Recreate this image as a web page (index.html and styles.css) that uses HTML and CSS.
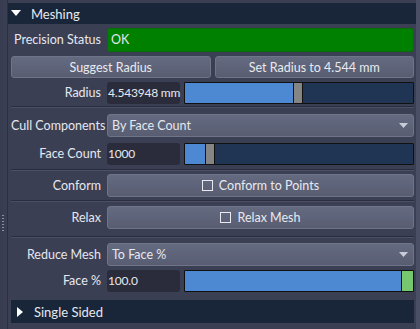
FILE: index.html
```html
<!DOCTYPE html>
<html>
<head>
<meta charset="utf-8">
<link rel="stylesheet" href="styles.css">
</head>
<body>
<div class="app">
  <div class="gutter"><div class="grip"></div></div>
  <div class="main">
    <div class="header">
      <svg class="tri" width="10" height="7" viewBox="0 0 10 7"><path d="M0 0H10L5 6Z" fill="#fff"/></svg>
      <span>Meshing</span>
    </div>
    <div class="body">
      <div class="row r-status">
        <div class="label">Precision Status</div>
        <div class="status">OK</div>
      </div>
      <div class="btnrow">
        <div class="btn">Suggest Radius</div>
        <div class="btn">Set Radius to 4.544 mm</div>
      </div>
      <div class="row r-radius">
        <div class="label">Radius</div>
        <div class="numslider">
          <div class="num">4.543948 mm</div>
          <div class="slider"><div class="fill" style="width:108px"></div><div class="handle"></div><div class="rest"></div></div>
        </div>
      </div>
      <div class="sep s1"></div>
      <div class="row r-cull">
        <div class="label">Cull Components</div>
        <div class="dropdown"><span>By Face Count</span><svg width="9" height="5" viewBox="0 0 9 5"><path d="M0 0H9L4.5 5Z" fill="#c9ccd6"/></svg></div>
      </div>
      <div class="row r-fc">
        <div class="label">Face Count</div>
        <div class="numslider">
          <div class="num">1000</div>
          <div class="slider"><div class="fill" style="width:20px"></div><div class="handle"></div><div class="rest"></div></div>
        </div>
      </div>
      <div class="sep s2"></div>
      <div class="row r-conform">
        <div class="label">Conform</div>
        <div class="btn check c1"><span class="box"></span>Conform to Points</div>
      </div>
      <div class="sep s3"></div>
      <div class="row r-relax">
        <div class="label">Relax</div>
        <div class="btn check"><span class="box"></span>Relax Mesh</div>
      </div>
      <div class="sep s4"></div>
      <div class="row r-reduce">
        <div class="label">Reduce Mesh</div>
        <div class="dropdown"><span>To Face %</span><svg width="9" height="5" viewBox="0 0 9 5"><path d="M0 0H9L4.5 5Z" fill="#c9ccd6"/></svg></div>
      </div>
      <div class="row r-fp">
        <div class="label">Face %</div>
        <div class="numslider">
          <div class="num">100.0</div>
          <div class="slider"><div class="fill full"></div><div class="handle green"></div></div>
        </div>
      </div>
      <div class="subheader">
        <svg class="tri" width="7" height="10" viewBox="0 0 7 10"><path d="M0 0V10L6 5Z" fill="#fff"/></svg>
        <span>Single Sided</span>
      </div>
    </div>
  </div>
  <div class="rightbar"></div>
</div>
</body>
</html>
```
FILE: styles.css
```css
* { box-sizing: border-box; }
html, body { margin: 0; padding: 0; }
body {
  background: #3b3f54;
  font-family: "Lato", "Noto Sans", sans-serif;
  font-size: 12.5px;
  color: #e6e8ee;
  width: 420px;
  height: 329px;
  overflow: hidden;
}
.app { display: flex; height: 329px; }
.gutter {
  width: 8px;
  background: #3a3e52;
  border-left: 3px solid #383c50;
  border-right: 1px solid #2c2f3f;
  position: relative;
}
.gutter .grip {
  position: absolute;
  left: -1px; top: 215px;
  width: 2px; height: 17px;
  background: repeating-linear-gradient(#8a8fa3 0 1px, transparent 1px 3px);
}
.main { flex: 1; padding-top: 3px; display: flex; flex-direction: column; }
.rightbar { width: 4px; background: #4a4f66; }
.header {
  height: 21px;
  background: #19263a;
  display: flex;
  align-items: center;
  padding-left: 3px;
  font-size: 13px;
  color: #e8eaf0;
}
.header .tri { margin-right: 10px; }
.body { padding: 4px 2px 0 3px; display: flex; flex-direction: column; }
.row {
  display: grid;
  grid-template-columns: 90px 1fr;
  column-gap: 6px;
  height: 23px;
}
.r-status { height: 24px; margin-bottom: 4px; }
.r-radius { height: 22px; margin-bottom: 2px; }
.r-cull { margin-bottom: 6px; }
.r-fc { height: 22px; margin-bottom: 3px; }
.r-conform { margin-bottom: 3px; }
.r-relax { margin-bottom: 5px; }
.r-reduce { margin-bottom: 4px; }
.r-fp { height: 22px; margin-bottom: 8px; }
.label {
  text-align: right;
  line-height: 23px;
  white-space: nowrap;
}
.r-radius .label, .r-fc .label, .r-fp .label { line-height: 22px; }
.status {
  background: #008000;
  border: 1px solid #0a6a0a;
  border-radius: 3px;
  line-height: 22px;
  padding-left: 3px;
  height: 24px;
}
.btnrow { display: flex; gap: 4px; height: 22px; margin-bottom: 4px; }
.btnrow .btn { flex: 1; height: 22px; }
.btn {
  background: linear-gradient(#646a80, #585d72);
  border: 1px solid #6f7489;
  border-radius: 3px;
  display: flex;
  align-items: center;
  justify-content: center;
  color: #e8eaf0;
  height: 23px;
}
.check .box {
  width: 11px; height: 11px;
  border: 1px solid #e8eaf0;
  margin-right: 6px;
}
.numslider { display: flex; gap: 4px; }
.num {
  width: 73px;
  background: #2b2c3b;
  border-radius: 3px;
  line-height: 22px;
  padding-left: 1px;
  font-size: 12px;
  letter-spacing: -0.2px;
  white-space: nowrap;
}
.slider {
  flex: 1;
  display: flex;
  border: 1px solid #111;
  border-radius: 1px;
  background: #1f3553;
}
.fill { background: #4d88d2; }
.fill.full { flex: 1; }
.handle { width: 10px; background: #858585; border-left: 1px solid #111; border-right: 1px solid #111; }
.handle.green { background: #76c76e; width: 12px; border-right: 0; }
.rest { flex: 1; }
.dropdown {
  background: linear-gradient(#646a80, #585d72);
  border: 1px solid #6f7489;
  border-radius: 3px;
  display: flex;
  align-items: center;
  justify-content: space-between;
  padding: 0 5px 0 4px;
}
.sep {
  height: 2px;
  border-top: 1px solid #2a2d3c;
  border-bottom: 1px solid #4b5068;
}
.s1 { margin-bottom: 6px; }
.s2 { margin-top: 1px; margin-bottom: 3px; }
.s3 { margin-bottom: 4px; }
.s4 { margin-top: 2px; margin-bottom: 5px; }
.subheader {
  height: 23px;
  background: #19263a;
  display: flex;
  align-items: center;
  padding-left: 6px;
  font-size: 13px;
}
.subheader .tri { margin-right: 10px; }
```
